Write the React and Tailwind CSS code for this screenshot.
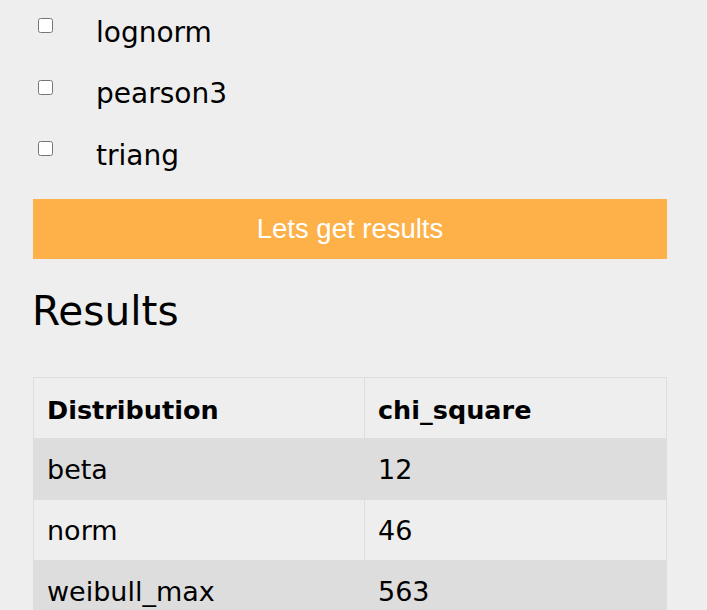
import { useState } from 'react';

const distributions = ['lognorm', 'pearson3', 'triang'];

const results = [
  { name: 'beta', chi: 12 },
  { name: 'norm', chi: 46 },
  { name: 'weibull_max', chi: 563 },
];

export default function App() {
  const [checked, setChecked] = useState({});

  function toggle(name) {
    setChecked((prev) => ({ ...prev, [name]: !prev[name] }));
  }

  return (
    <div className="min-h-screen bg-[#eeeeee] text-black font-['DejaVu_Sans',sans-serif]">
      <div className="ml-[33px] w-[634px]">
        {distributions.map((d) => (
          <label key={d} className="flex items-start h-[61.7px] cursor-pointer">
            <input
              type="checkbox"
              checked={!!checked[d]}
              onChange={() => toggle(d)}
              className="ml-[5px] mt-[18px] w-[15px] h-[15px] shrink-0"
            />
            <span className="ml-[43px] mt-[16.6px] text-[28px] leading-[32px]">{d}</span>
          </label>
        ))}

        <button
          type="button"
          className="mt-[14px] flex items-center justify-center w-full h-[60px] bg-[#feb049] text-white text-[27.5px] font-['Liberation_Sans',Arial,sans-serif]"
        >
          Lets get results
        </button>

        <h2 className="mt-[32.4px] -ml-[1px] text-[40.6px] leading-none font-normal">Results</h2>

        <table className="mt-[45.3px] w-full border-collapse border border-[#dddddd]">
          <thead>
            <tr className="bg-[#eeeeee]">
              <th className="w-[331px] h-[61px] pl-[13px] pr-[15px] pt-[3px] text-left align-middle border border-[#dddddd] text-[25.5px] font-bold">
                Distribution
              </th>
              <th className="h-[61px] pl-[13px] pr-[15px] pt-[3px] text-left align-middle border border-[#dddddd] text-[25.5px] font-bold">
                chi_square
              </th>
            </tr>
          </thead>
          <tbody>
            {results.map((r, i) => (
              <tr key={r.name} className={i % 2 === 0 ? 'bg-[#dddddd]' : 'bg-[#eeeeee]'}>
                <td className="h-[61px] pl-[13px] pr-[15px] pt-[2px] align-middle border border-[#dddddd] text-[27px]">
                  {r.name}
                </td>
                <td className="h-[61px] pl-[13px] pr-[15px] pt-[2px] align-middle border border-[#dddddd] text-[27px]">
                  {r.chi}
                </td>
              </tr>
            ))}
          </tbody>
        </table>
      </div>
    </div>
  );
}
